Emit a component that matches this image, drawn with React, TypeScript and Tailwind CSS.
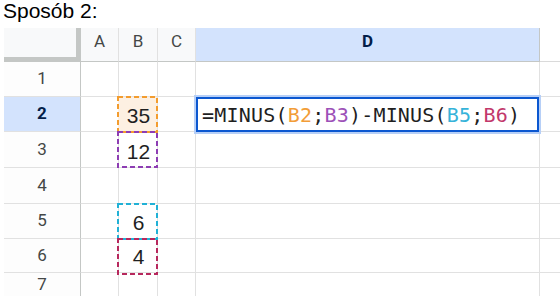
import React from "react";

type Ref = { v: string; color: string; fill?: string };

const refs: Record<string, Ref> = {
  "2": { v: "35", color: "#f39c2e", fill: "#fdf0e2" },
  "3": { v: "12", color: "#8d3db3" },
  "5": { v: "6", color: "#21b1d6" },
  "6": { v: "4", color: "#b7285d" },
};

function DashedBox({ color, fill }: { color: string; fill?: string }) {
  return (
    <svg
      className="absolute left-[-2px] top-[-1px] z-10 pointer-events-none"
      width={41}
      height={37}
      viewBox="0 0 41 37"
    >
      <rect
        x={1}
        y={1}
        width={39}
        height={35}
        fill={fill ?? "none"}
        stroke={color}
        strokeWidth={2}
        strokeDasharray="5 3"
      />
    </svg>
  );
}

function Formula() {
  return (
    <span className="font-['DejaVu_Sans_Mono',monospace] text-[20px] leading-none tracking-[0.2px] text-[#1f1f1f] whitespace-pre">
      =MINUS(
      <span className="text-[#f29d38]">B2</span>;
      <span className="text-[#9d51b8]">B3</span>
      )-MINUS(
      <span className="text-[#36b3d9]">B5</span>;
      <span className="text-[#c2386b]">B6</span>)
    </span>
  );
}

export default function App() {
  const rows = [1, 2, 3, 4, 5, 6, 7];
  const rowH = ["h-[35px]", "h-[35px]", "h-[36px]", "h-[36px]", "h-[35px]", "h-[34px]", "h-[24px]"];
  return (
    <div className="w-[560px] h-[296px] overflow-hidden bg-white">
      <div className="h-[28px] pl-[3px] font-['Liberation_Sans',Arial,sans-serif] text-[21px] leading-[22px] text-black">
        Sposób 2:
      </div>
      <div className="ml-[4px] grid grid-cols-[77px_38px_39px_38px_344px_20px] font-['Roboto',sans-serif]">
        {/* header row */}
        <div className="h-[34px] bg-[#f8f9fa] border-r-[5px] border-b-[5px] border-[#c4c7c5]" />
        {["A", "B", "C"].map((c) => (
          <div
            key={c}
            className="h-[34px] bg-[#f8f9fa] border-r border-[#e1e1e1] border-b border-b-[#c4c7c5] flex items-center justify-center pb-[5px] text-[17px] text-[#444746]"
          >
            {c}
          </div>
        ))}
        <div className="h-[34px] bg-[#d3e3fd] border-r border-r-[#c4c7c5] border-b border-b-[#c4c7c5] flex items-center justify-center pb-[5px] text-[17px] font-bold text-[#041e49]">
          D
        </div>
        <div className="h-[34px] bg-white border-b border-[#dadada]" />

        {rows.map((r, i) => {
          const active = r === 2;
          const ref = refs[String(r)];
          const h = rowH[i];
          return (
            <React.Fragment key={r}>
              <div
                className={`${h} border-r border-r-[#c4c7c5] border-b border-b-[#e1e1e1] flex items-center justify-center text-[17px] ${
                  active ? "bg-[#d3e3fd] font-bold text-[#041e49]" : "bg-[#fdfdfd] text-[#444746]"
                }`}
              >
                {r}
              </div>
              <div className={`${h} border-r border-b border-[#e1e1e1]`} />
              <div className={`${h} relative border-r border-b border-[#e1e1e1]`}>
                {ref && <DashedBox color={ref.color} fill={ref.fill} />}
                {ref && (
                  <div className="relative z-20 h-full flex items-end justify-center pb-[5px] pl-[1px] font-['Liberation_Sans',Arial,sans-serif] text-[21px] leading-none text-[#1f1f1f]">
                    {ref.v}
                  </div>
                )}
              </div>
              <div className={`${h} border-r border-b border-[#e1e1e1]`} />
              <div className={`${h} relative border-r border-b border-[#e1e1e1]`}>
                {active && (
                  <div className="absolute inset-x-0 top-0 bottom-[-1px] z-20 border-2 border-[#0b57d0] shadow-[0_0_0_2px_#b6cff7] bg-white flex items-center pl-[4px] pt-[1px]">
                    <Formula />
                  </div>
                )}
              </div>
              <div className={`${h} border-b border-[#e1e1e1]`} />
            </React.Fragment>
          );
        })}
      </div>
    </div>
  );
}
